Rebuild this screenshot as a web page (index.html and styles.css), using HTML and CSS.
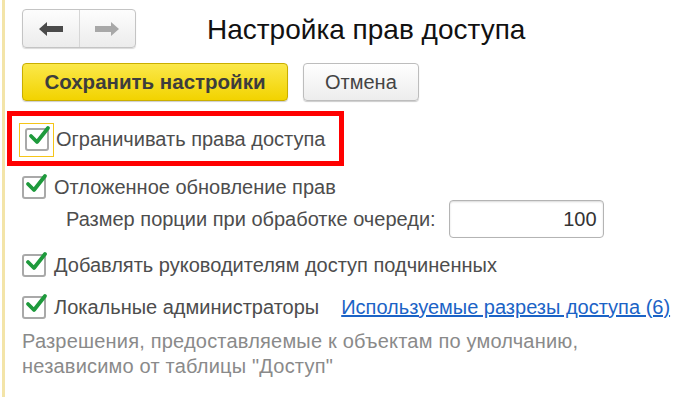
FILE: index.html
```html
<!DOCTYPE html>
<html lang="ru">
<head>
    <meta charset="UTF-8">
    <title>Настройка прав доступа</title>
    <link rel="stylesheet" href="styles.css">
</head>
<body>
    <div class="form">
        <div class="header">
            <div class="nav">
                <button class="nav-btn">
                    <svg width="26" height="16" viewBox="0 0 26 16"><path d="M1 8 L9 1 L9 5 L25 5 L25 11 L9 11 L9 15 Z" fill="#4a4a4a"/></svg>
                </button>
                <button class="nav-btn">
                    <svg width="26" height="16" viewBox="0 0 26 16"><path d="M25 8 L17 1 L17 5 L1 5 L1 11 L17 11 L17 15 Z" fill="#a8a8a8"/></svg>
                </button>
            </div>
            <h1 class="title">Настройка прав доступа</h1>
        </div>

        <div class="actions">
            <button class="btn btn-primary">Сохранить настройки</button>
            <button class="btn">Отмена</button>
        </div>

        <div class="highlight">
            <label class="check-row focused">
                <span class="check-frame"><span class="check">
                    <svg width="24" height="22" viewBox="0 0 24 22"><path d="M4 11 L10 17 L21 3" fill="none" stroke="#1e9a3c" stroke-width="3.8" stroke-linecap="round" stroke-linejoin="round"/></svg>
                </span></span>
                Ограничивать права доступа
            </label>
        </div>

        <label class="check-row">
            <span class="check">
                <svg width="24" height="22" viewBox="0 0 24 22"><path d="M4 11 L10 17 L21 3" fill="none" stroke="#1e9a3c" stroke-width="3.8" stroke-linecap="round" stroke-linejoin="round"/></svg>
            </span>
            Отложенное обновление прав
        </label>

        <div class="field-row">
            <span>Размер порции при обработке очереди:</span>
            <input class="num" type="text" value="100">
        </div>

        <label class="check-row row-gap">
            <span class="check">
                <svg width="24" height="22" viewBox="0 0 24 22"><path d="M4 11 L10 17 L21 3" fill="none" stroke="#1e9a3c" stroke-width="3.8" stroke-linecap="round" stroke-linejoin="round"/></svg>
            </span>
            Добавлять руководителям доступ подчиненных
        </label>

        <div class="check-row row-gap">
            <span class="check">
                <svg width="24" height="22" viewBox="0 0 24 22"><path d="M4 11 L10 17 L21 3" fill="none" stroke="#1e9a3c" stroke-width="3.8" stroke-linecap="round" stroke-linejoin="round"/></svg>
            </span>
            Локальные администраторы
            <a class="link" href="#">Используемые разрезы доступа (6)</a>
        </div>

        <p class="note">Разрешения, предоставляемые к объектам по умолчанию,<br>независимо от таблицы "Доступ"</p>
    </div>
</body>
</html>
```

FILE: styles.css
```css
body {
    margin: 0;
    padding: 0 0 0 2px;
    background-color: #fff;
    font-family: "Liberation Sans", Arial, sans-serif;
    color: #4d4d4d;
}
.form {
    border-left: 3px solid #f3e4a8;
    min-height: 397px;
    padding-left: 17px;
    box-sizing: border-box;
    padding-top: 9px;
}
.header {
    display: flex;
    align-items: center;
    height: 39px;
}
.nav {
    display: flex;
    width: 114px;
    height: 39px;
    border: 1px solid #c4c4c4;
    border-radius: 4px;
    box-sizing: border-box;
    background: linear-gradient(#fdfdfd, #ececec);
    box-shadow: 0 1px 1px rgba(0, 0, 0, 0.15);
}
.nav-btn {
    flex: 1;
    border: none;
    background: transparent;
    padding: 0;
    display: flex;
    align-items: center;
    justify-content: center;
}
.nav-btn + .nav-btn {
    border-left: 1px solid #d6d6d6;
}
.title {
    margin: 2px 0 0 71px;
    font-size: 28px;
    font-weight: normal;
    color: #111;
}
.actions {
    display: flex;
    gap: 15px;
    margin-top: 15px;
}
.btn {
    height: 38px;
    padding: 0 21px;
    font-family: inherit;
    font-size: 20px;
    color: #444;
    border: 1px solid #bdbdbd;
    border-radius: 4px;
    background: linear-gradient(#ffffff, #ededed);
    box-shadow: 0 1px 1px rgba(0, 0, 0, 0.2);
}
.btn-primary {
    width: 266px;
    padding: 0;
    font-size: 20.5px;
    font-weight: bold;
    color: #3d3d3d;
    border-color: #c9ae00;
    background: linear-gradient(#fbe84a, #f2d300);
}
.highlight {
    margin: 10px 0 0 -15px;
    width: 337px;
    height: 55px;
    border: 5px solid #f00;
    box-sizing: border-box;
    padding-left: 7px;
    display: flex;
    align-items: center;
}
.check-row {
    display: flex;
    align-items: center;
    gap: 8px;
    font-size: 20px;
    height: 30px;
    white-space: nowrap;
}
.highlight .check-row {
    gap: 2px;
    margin-top: 2px;
}
.check-frame {
    width: 35px;
    height: 34px;
    border: 1px solid #f5c518;
    box-sizing: border-box;
    display: flex;
    align-items: center;
    justify-content: center;
}
.check {
    position: relative;
    width: 24px;
    height: 23px;
    border: 2px solid #a9a9a9;
    border-radius: 3px;
    box-sizing: border-box;
    background: #fff;
    flex: none;
}
.check svg {
    position: absolute;
    left: 0;
    top: -5px;
}
.check-row:not(.focused) {
    margin-top: 6px;
}
.field-row {
    display: flex;
    align-items: center;
    gap: 13px;
    padding-left: 44px;
    font-size: 20px;
    margin-top: -2px;
}
.num {
    width: 155px;
    height: 38px;
    box-sizing: border-box;
    border: 1px solid #b4b4b4;
    border-radius: 4px;
    box-shadow: inset 0 1px 2px rgba(0, 0, 0, 0.15);
    text-align: right;
    padding-right: 6px;
    font-family: inherit;
    font-size: 20px;
    color: #333;
}
.row-gap {
    margin-top: 12px !important;
}
.link {
    margin-left: 14px;
    color: #1b63c6;
}
.note {
    margin: 7px 0 0;
    font-size: 20px;
    line-height: 25px;
    letter-spacing: 0.2px;
    color: #8a8a8a;
}
```
